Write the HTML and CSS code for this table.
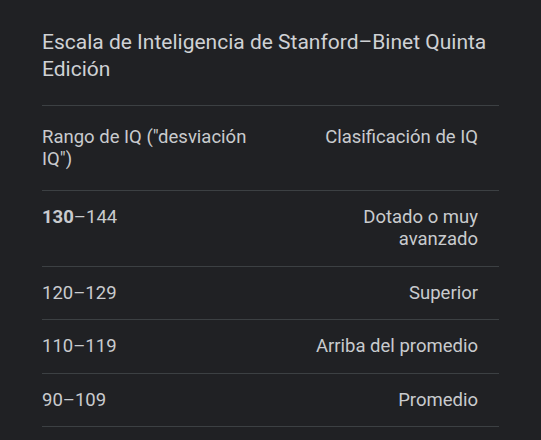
FILE: index.html
```html
<!DOCTYPE html>
<html lang="es">
<head>
<meta charset="utf-8">
<title>Stanford–Binet</title>
<link rel="stylesheet" href="styles.css">
</head>
<body>
<div class="card">
  <div class="title">Escala de Inteligencia de Stanford–Binet Quinta Edición</div>
  <table class="iq">
    <colgroup><col class="cl"><col class="cr"></colgroup>
    <thead>
      <tr><th class="l">Rango de IQ ("desviación IQ")</th><th class="r">Clasificación de IQ</th></tr>
    </thead>
    <tbody>
      <tr><td class="l"><b>130</b>–144</td><td class="r">Dotado o muy avanzado</td></tr>
      <tr><td class="l">120–129</td><td class="r">Superior</td></tr>
      <tr><td class="l">110–119</td><td class="r">Arriba del promedio</td></tr>
      <tr><td class="l">90–109</td><td class="r">Promedio</td></tr>
    </tbody>
  </table>
</div>
</body>
</html>
```
FILE: styles.css
```css
html, body {
  margin: 0;
  padding: 0;
  background: #202124;
}
body {
  font-family: Roboto, "Liberation Sans", sans-serif;
  color: #c9cbce;
}
.card {
  padding: 29px 42px 0 42px;
}
.title {
  font-size: 21px;
  line-height: 27px;
  padding-bottom: 22px;
  border-bottom: 1px solid #3c4043;
  color: #cfd1d4;
}
.iq {
  width: 100%;
  border-collapse: collapse;
  table-layout: fixed;
  font-size: 18.5px;
  line-height: 22px;
}
.iq .cl {
  width: 245px;
}
.iq th, .iq td {
  border-bottom: 1px solid #3c4043;
  vertical-align: top;
  padding: 15px 0 15.5px 0;
}
.iq th {
  font-weight: 400;
  padding: 20px 0;
}
.iq .l {
  text-align: left;
  padding-right: 20px;
}
.iq .r {
  text-align: right;
  padding-right: 21px;
}
.iq b {
  font-weight: 700;
}
```
